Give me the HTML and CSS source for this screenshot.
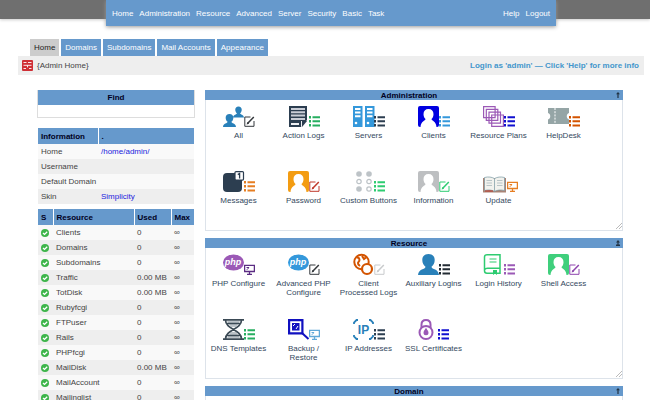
FILE: index.html
```html
<!DOCTYPE html>
<html lang="en">
<head>
<meta charset="utf-8">
<title>Admin Home</title>
<link rel="stylesheet" href="styles.css">
</head>
<body>
<svg class="sprite" aria-hidden="true">
  <symbol id="list" viewBox="0 0 11 11"><path fill="currentColor" d="M0 0h2v2.600H0zM3.500 .2H11v2H3.500zM0 4h2v2.600H0zM3.500 4.300H11v2H3.500zM0 8h2v2.600H0zM3.500 8.400H11v2H3.500z"/></symbol>
  <symbol id="edit" viewBox="0 0 11 11"><path fill="none" stroke="currentColor" stroke-width="1" d="M6.500 1H.8v9.300H10V5"/><path fill="none" stroke="currentColor" stroke-width="1.500" d="M3.500 7.600 9.800 1"/><path fill="currentColor" d="M2.600 8.600 3.400 6l1.700 1.700z"/></symbol>
  <symbol id="screen" viewBox="0 0 11 11"><path fill="none" stroke="currentColor" stroke-width="1.300" d="M.6 1.300h9.800v6.200H.6zM3 10.300h5M5.500 7.500v2.800"/><path fill="none" stroke="currentColor" d="M2.500 3.500h2.500M2.800 5.800l2-2"/></symbol>
  <symbol id="portrait" viewBox="0 0 21 21"><rect width="21" height="21" rx="2" fill="currentColor"/><path fill="#fff" d="M10.500 3c3.200 0 5 2 5 5.200 0 2.400-1 3.800-2 4.800.2 2 4.500 2 5 8h-16c.5-6 4.800-6 5-8-1-1-2-2.400-2-4.800C5.500 5 7.300 3 10.500 3z"/></symbol>
  <symbol id="person" viewBox="0 0 21 21"><path fill="currentColor" d="M10.500 0c4 0 6.200 2.500 6.200 6 0 3-1.400 5.500-3.200 6.700.3 3 7 1.800 7.500 8.300H0c.5-6.500 7.200-5.300 7.500-8.300C5.700 11.500 4.300 9 4.300 6c0-3.500 2.200-6 6.200-6z"/></symbol>
  <symbol id="ok" viewBox="0 0 8 8"><circle cx="4" cy="4" r="4" fill="#3db54a"/><path fill="none" stroke="#fff" stroke-width="1.300" d="m2 4 1.500 1.400L6.200 2.700"/></symbol>
</svg>
<div class="page">
  <header class="top">
    <nav class="menu">
      <a href="#">Home</a><a href="#">Administration</a><a href="#">Resource</a><a href="#">Advanced</a><a href="#">Server</a><a href="#">Security</a><a href="#">Basic</a><a href="#">Task</a>
      <a class="push" href="#">Help</a><a href="#">Logout</a>
    </nav>
  </header>
  <div class="shell">
    <nav class="tabs">
      <a class="current" href="#">Home</a><a href="#">Domains</a><a href="#">Subdomains</a><a href="#">Mail Accounts</a><a href="#">Appearance</a>
    </nav>
    <div class="crumb">
      <svg class="crumb-icon" viewBox="0 0 11 11" aria-hidden="true"><rect width="11" height="11" rx="1" fill="#cf2f35"/><path fill="none" stroke="#fff" stroke-width=".9" d="M1.500 2.500h3M6 2.500h3.500M1.500 5.300h8M5.500 5.300v2M1.500 8.500h2.500M7 8.500h2.500"/></svg>
      <span>{Admin Home}</span>
      <strong class="notice">Login as 'admin' — Click 'Help' for more info</strong>
    </div>
    <div class="columns">
      <aside class="side">
        <div class="find">
          <label for="find">Find</label>
          <input id="find" type="text">
        </div>
        <table class="info">
          <thead><tr><th>Information</th><th>.</th></tr></thead>
          <tbody>
            <tr><td>Home</td><td><a href="#">/home/admin/</a></td></tr>
            <tr><td>Username</td><td></td></tr>
            <tr><td>Default Domain</td><td></td></tr>
            <tr><td>Skin</td><td><a href="#">Simplicity</a></td></tr>
          </tbody>
        </table>
        <table class="usage">
          <thead><tr><th>S</th><th>Resource</th><th>Used</th><th>Max</th></tr></thead>
          <tbody>
            <tr><td><svg><use href="#ok"/></svg></td><td>Clients</td><td>0</td><td>∞</td></tr>
            <tr><td><svg><use href="#ok"/></svg></td><td>Domains</td><td>0</td><td>∞</td></tr>
            <tr><td><svg><use href="#ok"/></svg></td><td>Subdomains</td><td>0</td><td>∞</td></tr>
            <tr><td><svg><use href="#ok"/></svg></td><td>Traffic</td><td>0.00 MB</td><td>∞</td></tr>
            <tr><td><svg><use href="#ok"/></svg></td><td>TotDisk</td><td>0.00 MB</td><td>∞</td></tr>
            <tr><td><svg><use href="#ok"/></svg></td><td>Rubyfcgi</td><td>0</td><td>∞</td></tr>
            <tr><td><svg><use href="#ok"/></svg></td><td>FTPuser</td><td>0</td><td>∞</td></tr>
            <tr><td><svg><use href="#ok"/></svg></td><td>Rails</td><td>0</td><td>∞</td></tr>
            <tr><td><svg><use href="#ok"/></svg></td><td>PHPfcgi</td><td>0</td><td>∞</td></tr>
            <tr><td><svg><use href="#ok"/></svg></td><td>MailDisk</td><td>0.00 MB</td><td>∞</td></tr>
            <tr><td><svg><use href="#ok"/></svg></td><td>MailAccount</td><td>0</td><td>∞</td></tr>
            <tr><td><svg><use href="#ok"/></svg></td><td>Mailinglist</td><td>0</td><td>∞</td></tr>
          </tbody>
        </table>
      </aside>
      <main class="panels">
        <section class="panel">
          <h2>Administration<button type="button" aria-label="Collapse Administration"><svg viewBox="0 0 6 6"><path fill="#234" d="M3 0l2 2.300H3.600V6H2.400V2.300H1z"/></svg></button></h2>
          <div class="grid">
            <a href="#"><svg viewBox="0 0 32 21"><g color="#2980b9"><use href="#person" x="10" y="0" width="11" height="12"/><use href="#person" y="8" width="13" height="13"/></g><use href="#edit" x="21" y="10" width="11" height="11" color="#34383c"/></svg>All</a>
            <a href="#"><svg viewBox="0 0 32 21"><path fill="#2c3e50" d="M1 0h18v14l-6 7H1z"/><path stroke="#c9cdd6" stroke-width="2" d="M3 3h14M3 6.300h14M3 9.600h14M3 12.900h14"/><path fill="#eef0f3" d="M3 17h8v2H3zM13 15h6v1l-6 5z"/><path fill="#2c3e50" d="m14 15 5 0-5 6z"/><use href="#list" x="21" y="10" width="11" height="11" color="#27ae60"/></svg>Action Logs</a>
            <a href="#"><svg viewBox="0 0 32 21"><path fill="#3498db" d="M0 0h9.500v21H0zM12 0h9.500v21H12z"/><path stroke="#fff" stroke-width="2" d="M2 3h5.500M2 6.600h5.500M2 10.200h5.500M14 3h5.500M14 6.600h5.500M14 10.200h5.500"/><circle cx="3" cy="17" r="1.300" fill="#fff"/><circle cx="15" cy="17" r="1.300" fill="#fff"/><use href="#list" x="21" y="10" width="11" height="11" color="#2c3e50"/></svg>Servers</a>
            <a href="#"><svg viewBox="0 0 32 21"><use href="#portrait" width="21" height="21" color="#0000e0"/><use href="#list" x="21" y="10" width="11" height="11" color="#3498db"/></svg>Clients</a>
            <a href="#"><svg viewBox="0 0 32 21"><g fill="#fff" stroke="#9b59b6" stroke-width="1.200"><path d="M.6.6h11.500v11H.6zM3.300 3.400h11.500v11H3.300zM6 6.200h11.500v11H6zM8.700 9h11.700v11.400H8.700z"/></g><use href="#list" x="21" y="10" width="11" height="11" color="#1010d0"/></svg>Resource Plans</a>
            <a href="#"><svg viewBox="0 0 32 21"><path fill="#95a5a6" d="M0 2h21v5c-3 .5-3 6 0 6.500V18H0v-4.500C3 13 3 7.500 0 7z"/><path stroke="#fff" stroke-width="1" stroke-dasharray="2 1.200" d="M7 2v16"/><use href="#list" x="21" y="10" width="11" height="11" color="#d35400"/></svg>HelpDesk</a>
            <a href="#"><svg viewBox="0 0 32 21"><rect y="2" width="19" height="19" rx="4" fill="#2c3e50"/><rect x="12" y=".6" width="8.500" height="8.500" rx="1" fill="#fff" stroke="#2c3e50" stroke-width="1.200"/><path stroke="#2c3e50" stroke-width="1.300" fill="none" d="M14.800 3.600 16.600 2.500V7.500"/><use href="#list" x="21" y="10" width="11" height="11" color="#e67e22"/></svg>Messages</a>
            <a href="#"><svg viewBox="0 0 32 21"><use href="#portrait" width="21" height="21" color="#f39c12"/><use href="#edit" x="21" y="10" width="11" height="11" color="#c0392b"/></svg>Password</a>
            <a href="#"><svg viewBox="0 0 32 21"><g fill="#bdc3c7"><circle cx="6" cy="3" r="2.800"/><circle cx="16" cy="3" r="2.800"/><circle cx="6" cy="18" r="2.800"/></g><g fill="none" stroke="#bdc3c7" stroke-width="1.200"><circle cx="6" cy="10.500" r="2.200"/><circle cx="16" cy="10.500" r="2.200"/><circle cx="16" cy="18" r="2.200"/></g><use href="#list" x="21" y="10" width="11" height="11" color="#2ecc71"/></svg>Custom Buttons</a>
            <a href="#"><svg viewBox="0 0 32 21"><use href="#portrait" width="21" height="21" color="#bdbfc1"/><use href="#edit" x="21" y="10" width="11" height="11" color="#2ecc71"/></svg>Information</a>
            <a href="#"><svg viewBox="0 0 32 21"><path fill="#a98476" d="M0 7h23v14.500H0z"/><path fill="#f2f2ee" stroke="#7796a0" stroke-width=".7" d="M1.500 6.500c4-1 7-.5 10 1 3-1.500 6-2 10-1v13c-4-1-7-.5-10 .8-3-1.300-6-1.800-10-.8zM11.500 7.500v13"/><path fill="none" stroke="#a9b9bd" stroke-width=".8" d="M3.500 9.500h5.500M3.500 12h5.500M3.500 14.500h5.500M14 9.500h5.500M14 12h5.500M14 14.500h5.500"/><path stroke="#c0392b" d="M2 20h8"/><use href="#screen" x="24" y="10" width="11" height="11" color="#e67e22"/></svg>Update</a>
          </div>
          <svg class="grip" viewBox="0 0 6 6" aria-hidden="true"><path stroke="#aaa" stroke-width=".8" d="M0 6 6 0M3 6l3-3"/></svg>
        </section>
        <section class="panel">
          <h2>Resource<button type="button" aria-label="Collapse Resource"><svg viewBox="0 0 6 6"><path fill="#234" d="M3 0l2 2.500H3.600v2H5V6H1V4.500h1.400v-2H1z"/></svg></button></h2>
          <div class="grid">
            <a href="#"><svg viewBox="0 0 32 21"><ellipse cx="10.500" cy="8.500" rx="10.500" ry="8" fill="#9b59b6"/><text class="php" x="10" y="11">php</text><use href="#screen" x="21" y="10" width="11" height="11" color="#5b2c83"/></svg>PHP Configure</a>
            <a href="#"><svg viewBox="0 0 32 21"><ellipse cx="10.500" cy="8.500" rx="10.500" ry="8" fill="#3498db"/><text class="php" x="10" y="11">php</text><use href="#edit" x="21" y="10" width="11" height="11" color="#34383c"/></svg>Advanced PHP Configure</a>
            <a href="#"><svg viewBox="0 0 32 21"><g fill="none" stroke="#d35400"><circle cx="8.500" cy="8" r="7.200" stroke-width="2"/><path stroke-width="2" d="M4 3.500c3 0 3 3 1.500 4.500S6 11 7 12M9 2l2 3 2-1.500"/><circle cx="14" cy="15" r="5" stroke-width="2.200" fill="#fff"/></g><use href="#edit" x="21" y="10" width="11" height="11" color="#c8cacc"/></svg>Client<br>Processed Logs</a>
            <a href="#"><svg viewBox="0 0 32 21"><use href="#person" width="21" height="21" color="#2980b9"/><use href="#list" x="21" y="10" width="11" height="11" color="#222b33"/></svg>Auxiliary Logins</a>
            <a href="#"><svg viewBox="0 0 32 21"><path fill="#fff" stroke="#2ecc71" stroke-width="1.500" d="M4 .8h13v18.500H4c-1.500 0-2.500-1-2.500-2.500V3C1.500 1.600 2.500.8 4 .8zM1.500 16c.5-1.500 1.500-1.800 3-1.800H17"/><path stroke="#2ecc71" stroke-width="1.200" d="M6.500 5h7M6.500 8h7"/><path fill="#2ecc71" d="M10 16h4v5l-2-1.500-2 1.500z"/><use href="#list" x="21" y="10" width="11" height="11" color="#9b59b6"/></svg>Login History</a>
            <a href="#"><svg viewBox="0 0 32 21"><use href="#portrait" width="21" height="21" color="#3fcf7c"/><use href="#edit" x="21" y="10" width="11" height="11" color="#8e44ad"/></svg>Shell Access</a>
            <a href="#"><svg viewBox="0 0 32 21"><path fill="#bcc3c8" d="M4 2h13l-4 6H8zM8 13h5l4 6H4z"/><path fill="none" stroke="#3b4a55" stroke-width="1.700" d="M0 .9h21M0 20.100h21M2.500 1c0 9.500 16 9.500 16 19M18.500 1c0 9.500-16 9.500-16 19M4 4.500h13M4 16.500h13"/><use href="#list" x="21" y="10" width="11" height="11" color="#27ae60"/></svg>DNS Templates</a>
            <a href="#"><svg viewBox="0 0 32 21"><path fill="#fff" stroke="#1010c0" stroke-width="2.200" d="M1.100 1.100h13.300v13.300H1.100z"/><path fill="#1010c0" d="M4 4h7.500v7.500H4z"/><path stroke="#fff" stroke-width="1" d="m5 7 2-2M8 10l2-3"/><path stroke="#1010c0" stroke-width="2" d="m14 14 6.500 6"/><use href="#screen" x="21" y="10" width="11" height="11" color="#5fa8d8"/></svg>Backup /<br>Restore</a>
            <a href="#"><svg viewBox="0 0 32 21"><path fill="none" stroke="#2980b9" stroke-width="1.800" d="M1 5V3.500L3.500 1H5M16 1h1.500L20 3.500V5M1 16v1.500L3.500 20H5M16 20h1.500l2.500-2.500V16"/><text class="ip" x="10.500" y="15">IP</text><use href="#list" x="21" y="10" width="11" height="11" color="#2c3e50"/></svg>IP Addresses</a>
            <a href="#"><svg viewBox="0 0 32 21"><g fill="none" stroke="#9b59b6" stroke-width="2"><circle cx="8" cy="13.500" r="6.500"/><path d="M3.500 9V5.500C3.500 2.500 5.500 1 8 1s4.500 1.500 4.500 4.500V9"/></g><path fill="#9b59b6" d="M8 8.500c.5 2 2.500 3 2.500 5.300a2.500 2.500 0 0 1-5 0C5.500 11.500 7.500 10.500 8 8.500z"/><use href="#list" x="20" y="10" width="11" height="11" color="#1010d0"/></svg>SSL Certificates</a>
          </div>
          <svg class="grip" viewBox="0 0 6 6" aria-hidden="true"><path stroke="#aaa" stroke-width=".8" d="M0 6 6 0M3 6l3-3"/></svg>
        </section>
        <section class="panel">
          <h2>Domain<button type="button" aria-label="Collapse Domain"><svg viewBox="0 0 6 6"><path fill="#234" d="M3 0l2 2.300H3.600V6H2.400V2.300H1z"/></svg></button></h2>
          <div class="grid"></div>
        </section>
      </main>
    </div>
  </div>
</div>
</body>
</html>
```
FILE: styles.css
```css
* { box-sizing: border-box; }

body {
  margin: 0;
  background: #fff;
  color: #444;
  font: 8px/9px "Liberation Sans", Arial, sans-serif;
}

a { color: inherit; text-decoration: none; }

.sprite { display: none; }

.page {
  height: 100vh;
  overflow: hidden;
}

.top {
  height: 19px;
  padding: 0 94px 0 106px;
  background: #6f6f6f;
  box-shadow: 0 1px 3px #ccc;
}

.menu {
  display: flex;
  align-items: center;
  gap: 6px;
  height: 26px;
  padding: 0 6px;
  background: #6699cc;
  box-shadow: 0 1px 4px #999;
  color: #fff;
}

.push { margin-left: auto; }

.shell { padding: 20px 6px 0 18px; }

.tabs {
  display: flex;
  gap: 2px;
  padding-left: 12px;
}

.tabs a {
  padding: 4px;
  background: #6699cc;
  color: #fff;
}

.tabs .current {
  background: #ccc;
  color: #222;
}

.crumb {
  display: flex;
  align-items: center;
  gap: 4px;
  height: 19px;
  padding: 0 5px 0 4px;
  background: #eee;
}

.crumb-icon { width: 11px; height: 11px; }

.notice { margin-left: auto; color: #4396cc; }

.columns {
  display: flex;
  gap: 10px;
  padding: 15px 21px 0 19px;
}

.side { flex: 0 0 158px; }

.find {
  border: 1px solid #ddd;
  border-top: 0;
}

.find label {
  display: block;
  padding: 3px 0;
  background: #6699cc;
  color: #002;
  font-weight: bold;
  text-align: center;
}

.find input {
  display: block;
  width: 100%;
  height: 12px;
  padding: 0 2px;
  border: 0;
  font: inherit;
}

table {
  width: 156px;
  margin: 10px 1px 0;
  border-collapse: collapse;
  table-layout: fixed;
}

th {
  height: 16px;
  padding: 0 3px;
  background: #6699cc;
  color: #002;
  text-align: left;
}

th + th { border-left: 1px solid #fff; }

td {
  height: 15px;
  padding: 0 3px;
  background: #f9f9f9;
  white-space: nowrap;
}

tbody tr:nth-child(even) td { background: #eee; }

.info th:first-child { width: 60px; }
.info a { color: #2222dd; }

.usage { margin-top: 5px; }
.usage th:nth-child(1) { width: 15px; }
.usage th:nth-child(3) { width: 37px; }
.usage th:nth-child(4) { width: 23px; }
.usage svg { display: block; width: 8px; height: 8px; }

.panels {
  flex: 1;
  min-width: 0;
}

.panel {
  position: relative;
  height: 141px;
  margin-bottom: 7px;
  border: 1px solid #dde3ea;
  border-top: 0;
}

.panel h2 {
  display: flex;
  align-items: center;
  justify-content: center;
  height: 10px;
  margin: 0 -1px;
  padding-right: 10px;
  background: #6699cc;
  color: #002;
  font: inherit;
  font-weight: bold;
}

.panel button {
  position: absolute;
  right: 1px;
  top: 2px;
  width: 6px;
  height: 6px;
  padding: 0;
  border: 0;
  background: none;
}

.panel button svg { display: block; }

.grid {
  display: grid;
  grid-template-columns: repeat(auto-fill, 65px);
  grid-auto-rows: 65px;
  padding-top: 6px;
}

.grid a {
  padding: 0 2px;
  color: #34495e;
  text-align: center;
}

.grid svg {
  display: block;
  width: 32px;
  height: 21px;
  margin: 0 auto 4px;
  overflow: visible;
}

.php {
  fill: #fff;
  font: italic bold 9px "Liberation Sans", sans-serif;
  text-anchor: middle;
}

.ip {
  fill: #2980b9;
  font: bold 12px "Liberation Sans", sans-serif;
  text-anchor: middle;
}

.grip {
  position: absolute;
  right: 0;
  bottom: 1px;
  width: 6px;
  height: 6px;
}
```
